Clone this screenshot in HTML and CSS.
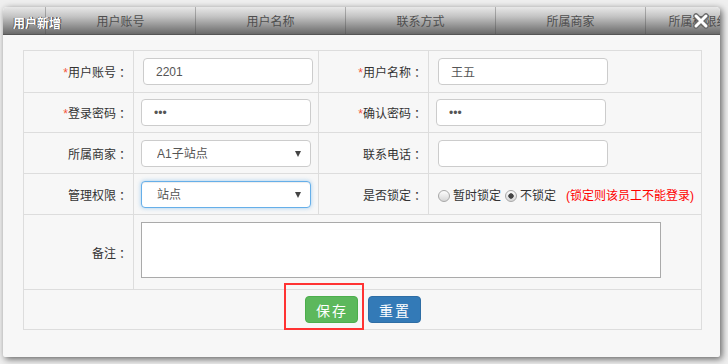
FILE: index.html
```html
<!DOCTYPE html>
<html lang="zh-CN">
<head>
<meta charset="utf-8">
<title>用户新增</title>
<link rel="stylesheet" href="styles.css">
</head>
<body>
<div class="dialog">
  <div class="titlebar">
    <div class="hcell first"></div>
    <div class="hcell">用户账号</div>
    <div class="hcell">用户名称</div>
    <div class="hcell">联系方式</div>
    <div class="hcell">所属商家</div>
    <div class="hcell last">所属权限组</div>
    <span class="title">用户新增</span>
    <svg class="close" width="18" height="18" viewBox="0 0 18 18">
      <path d="M4 4 L14 14 M14 4 L4 14" stroke="#6a6a6a" stroke-width="5.5" stroke-linecap="round"/>
      <path d="M4 4 L14 14 M14 4 L4 14" stroke="#ffffff" stroke-width="3" stroke-linecap="round"/>
    </svg>
  </div>
  <div class="content">
    <table class="form">
      <colgroup>
        <col class="c-lbl"><col class="c-in"><col class="c-lbl"><col class="c-in2">
      </colgroup>
      <tr class="r1">
        <td class="lbl"><span class="req">*</span>用户账号<span class="colon">：</span></td>
        <td><input class="ipt shift" type="text" value="2201"></td>
        <td class="lbl"><span class="req">*</span>用户名称<span class="colon">：</span></td>
        <td><input class="ipt shift" type="text" value="王五"></td>
      </tr>
      <tr class="r2">
        <td class="lbl"><span class="req">*</span>登录密码<span class="colon">：</span></td>
        <td><input class="ipt" type="password" value="123"></td>
        <td class="lbl"><span class="req">*</span>确认密码<span class="colon">：</span></td>
        <td><input class="ipt" type="password" value="123"></td>
      </tr>
      <tr class="r3">
        <td class="lbl">所属商家<span class="colon">：</span></td>
        <td><span class="sel"><select class="ipt"><option>A1子站点</option></select></span></td>
        <td class="lbl">联系电话<span class="colon">：</span></td>
        <td><input class="ipt shift" type="text" value=""></td>
      </tr>
      <tr class="r4">
        <td class="lbl">管理权限<span class="colon">：</span></td>
        <td><span class="sel"><select class="ipt focus"><option>站点</option></select></span></td>
        <td class="lbl">是否锁定<span class="colon">：</span></td>
        <td class="radios">
          <input class="rd first-rd" type="radio" name="lock"><span class="rtxt">暂时锁定</span><input class="rd" type="radio" name="lock" checked><span class="rtxt">不锁定</span><span class="note">(锁定则该员工不能登录)</span>
        </td>
      </tr>
      <tr class="r5">
        <td class="lbl">备注<span class="colon">：</span></td>
        <td colspan="3"><textarea class="memo"></textarea></td>
      </tr>
      <tr class="r6">
        <td colspan="4">
          <div class="btns">
            <span class="hl"><button class="btn green">保存</button><span class="mark"></span></span>
            <button class="btn blue">重置</button>
          </div>
        </td>
      </tr>
    </table>
  </div>
</div>
</body>
</html>
```

FILE: styles.css
```css
html, body {
  margin: 0;
  background: #efefef;
}
body {
  width: 728px;
  height: 364px;
  overflow: hidden;
  padding: 7px 0 0 3px;
  box-sizing: border-box;
  font-family: "Liberation Sans", "Noto Sans CJK SC", sans-serif;
  font-size: 12px;
  color: #333;
}
.dialog {
  position: relative;
  width: 717px;
  height: 350px;
  background: #f7f7f7;
  border-radius: 4px 4px 2px 2px;
  box-shadow: 2px 2px 7px rgba(0, 0, 0, 0.6);
  overflow: hidden;
}
.titlebar {
  position: relative;
  display: flex;
  height: 27px;
  border-bottom: 1px solid #555;
  border-radius: 4px 4px 0 0;
  background: linear-gradient(#e8e8e8 0%, #c4c4c4 35%, #9a9a9a 65%, #6a6a6a 100%);
  color: #4e4e4e;
  font-size: 12px;
}
.hcell {
  flex: none;
  width: 150px;
  box-sizing: border-box;
  border-left: 1px solid rgba(70, 70, 70, 0.35);
  display: flex;
  align-items: center;
  justify-content: center;
}
.hcell.first {
  width: 42px;
  border-left: none;
}
.hcell.last {
  width: 106px;
}
.title {
  position: absolute;
  left: 10px;
  top: 7px;
  color: #fff;
  font-weight: bold;
  text-shadow: 1px 0 0 #444, -1px 0 0 #666;
}
.close {
  position: absolute;
  left: 689px;
  top: 5px;
}
.content {
  padding: 15px 19px 0 20px;
}
.form {
  border-collapse: collapse;
  table-layout: fixed;
  width: 678px;
}
.c-lbl { width: 110px; }
.c-in { width: 185px; }
.c-in2 { width: 273px; }
.form td {
  border: 1px solid #ddd;
  padding: 0;
  vertical-align: middle;
}
.r1 { height: 42px; }
.r2 { height: 40px; }
.r3 { height: 41px; }
.r4 { height: 41px; }
.r5 { height: 75px; }
.r6 { height: 40px; }
.lbl {
  text-align: right;
  padding-right: 2px !important;
  white-space: nowrap;
}
.colon {
  margin-left: 3px;
}
.req {
  color: #f5553b;
}
.ipt {
  box-sizing: border-box;
  width: 170px;
  height: 27px;
  margin: 0 0 0 7px;
  padding: 0 12px;
  border: 1px solid #ccc;
  border-radius: 4px;
  background: #fff;
  font-family: "Liberation Sans", "Noto Sans CJK SC", sans-serif;
  font-size: 12px;
  color: #555;
  vertical-align: middle;
  outline: none;
}
.ipt.shift {
  margin-left: 9px;
}
select.ipt {
  -webkit-appearance: none;
  appearance: none;
  padding-left: 15px;
  margin-top: 1px;
}
.sel {
  position: relative;
  display: inline-block;
}
.sel::after {
  content: "";
  position: absolute;
  right: 10px;
  top: 12px;
  border-left: 3.5px solid transparent;
  border-right: 3.5px solid transparent;
  border-top: 6px solid #444;
}
.ipt.focus {
  border-color: #66afe9;
  box-shadow: inset 0 1px 1px rgba(0, 0, 0, 0.075), 0 0 4px rgba(102, 175, 233, 0.6);
}
.radios {
  white-space: nowrap;
}
.rd {
  -webkit-appearance: none;
  appearance: none;
  box-sizing: border-box;
  width: 12px;
  height: 12px;
  margin: 0 3px 0 4px;
  border: 1px solid #a8a8a8;
  border-radius: 50%;
  background: linear-gradient(#fdfdfd, #d6d6d6);
  vertical-align: -2px;
}
.rd.first-rd {
  margin-left: 9px;
}
.rd:checked {
  background: radial-gradient(circle, #444 0, #444 2.4px, transparent 3px), linear-gradient(#fdfdfd, #d6d6d6);
}
.rtxt {
  color: #333;
}
.note {
  margin-left: 10px;
  color: #f00;
}
.memo {
  display: block;
  box-sizing: border-box;
  width: 520px;
  height: 56px;
  margin: 7px 0 11px 7px;
  border: 1px solid #aaa;
  background: #fff;
  resize: none;
}
.btns {
  display: flex;
  justify-content: center;
  gap: 10px;
}
.hl {
  position: relative;
  display: inline-block;
}
.mark {
  position: absolute;
  left: -21px;
  top: -13px;
  right: -6px;
  bottom: -7px;
  border: 2px solid #f33;
}
.btn {
  box-sizing: border-box;
  width: 53px;
  height: 27px;
  padding: 0 0 0 2px;
  border-radius: 4px;
  font-family: "Noto Sans CJK SC", sans-serif;
  font-size: 14px;
  letter-spacing: 2px;
  color: #fff;
  display: block;
}
.green {
  background: #5cb85c;
  border: 1px solid #4cae4c;
}
.blue {
  background: #337ab7;
  border: 1px solid #2e6da4;
}
```
